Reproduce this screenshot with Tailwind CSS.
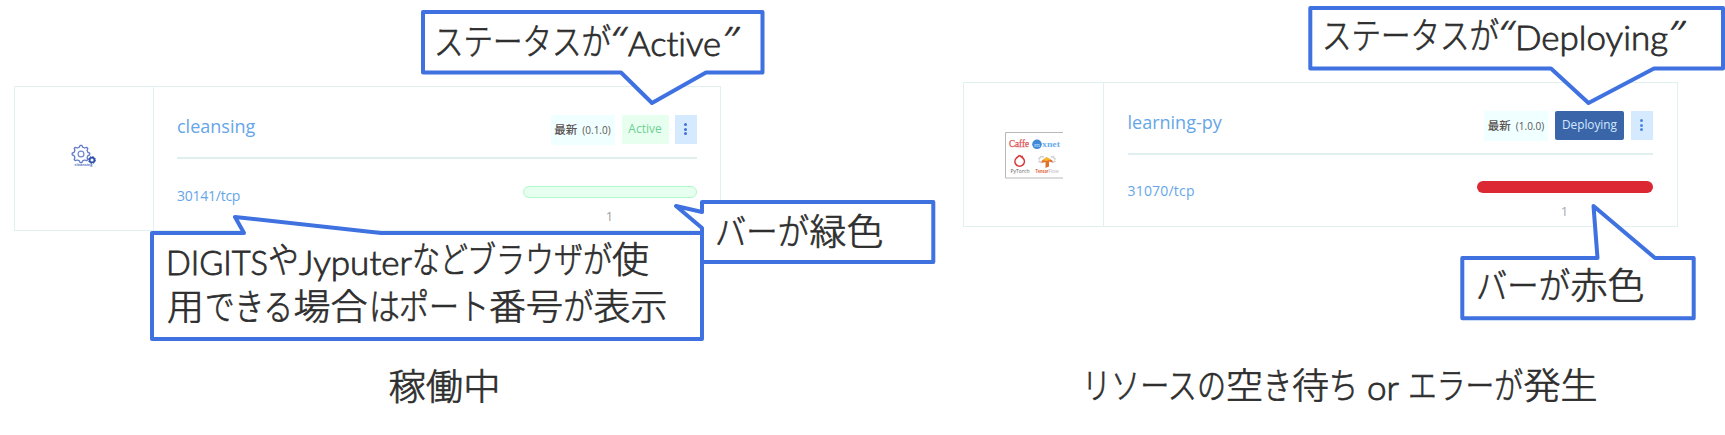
<!DOCTYPE html>
<html lang="ja">
<head>
<meta charset="utf-8">
<title>Status</title>
<script src="https://cdn.jsdelivr.net/npm/@tailwindcss/browser@4"></script>
</head>
<body class="bg-white">
<main class="relative w-[1725px] h-[435px] overflow-hidden font-['Open_Sans','Noto_Sans_CJK_JP',sans-serif]">
  <div class="flex items-start pl-[14px]">
    <!-- running container -->
    <section class="mt-[86px] flex w-[707px] h-[145px] border-[1.5px] border-[#e2f0f0]">
      <div class="flex w-[139px] shrink-0 items-center justify-center border-r-[1.5px] border-[#e2f0f0]">
        <svg class="-ml-0.5 -mt-1" width="28" height="26" viewBox="0 0 28 26" fill="none">
          <path d="M10.3 3.2L11.2 1.3H12.8L13.7 3.2L15.6 4L17.6 3.3L18.8 4.5L18.1 6.5L18.9 8.3L20.7 9.2V10.8L18.9 11.7L18.1 13.5L18.8 15.5L17.6 16.7L15.6 16L13.7 16.8L12.8 18.7H11.2L10.3 16.8L8.4 16L6.4 16.7L5.2 15.5L5.9 13.5L5.1 11.7L3.2 10.8V9.2L5.1 8.3L5.9 6.5L5.2 4.5L6.4 3.3L8.4 4Z" stroke="#5f7bc8" stroke-width="1.3" stroke-linejoin="round"/>
          <circle cx="12" cy="10" r="2.9" stroke="#6f88cf" stroke-width="1.2"/>
          <circle cx="23" cy="16" r="2.4" fill="#fff" stroke="#2f4fae" stroke-width="1.7"/>
          <circle cx="23" cy="16" r="3.5" stroke="#2f4fae" stroke-width="1" stroke-dasharray="1.5 1.25"/>
          <text x="5.5" y="22" textLength="18" lengthAdjust="spacingAndGlyphs" fill="#5f7bc8" font-size="4" font-weight="700">cleansing</text>
        </svg>
      </div>
      <div class="flex flex-1 flex-col pl-[23px] pr-[23.5px] pt-[28px]">
        <div class="flex h-[30px] items-start">
          <h2 class="-mt-px flex-1 text-[18px] leading-[24px] text-[#65a6e8]">cleansing</h2>
          <div class="flex h-[29.5px] w-[64px] items-center justify-center gap-[5px] bg-[#f0ffff] text-[#5c5453]"><span class="text-[11.5px] leading-none font-medium">最新</span><span class="text-[10px] leading-none">(0.1.0)</span></div>
          <div class="ml-[7px] flex h-[28.5px] w-[47px] items-center justify-center rounded-[2px] bg-[#e6ffee] text-[12px] text-[#6fcf97]">Active</div>
          <div class="ml-[6px] flex h-[28.5px] w-[22px] flex-col items-center justify-center gap-[1.6px] bg-[#d5eafe]"><i class="size-[3px] rounded-full bg-[#3f72d8]"></i><i class="size-[3px] rounded-full bg-[#3f72d8]"></i><i class="size-[3px] rounded-full bg-[#3f72d8]"></i></div>
        </div>
        <div class="mt-[12px] h-[2px] bg-[#e0eeee]"></div>
        <div class="flex justify-between pt-[26.5px]">
          <p class="text-[14px] leading-[20px] -tracking-[0.25px] text-[#65a6e8]">30141/tcp</p>
          <div class="w-[174px]">
            <div class="h-[12px] rounded-full border-[1.5px] border-[#aefac8] bg-[#e6ffee]"></div>
            <div class="mt-[9px] text-center text-[13px] leading-[18px] text-[#a3a09f]">1</div>
          </div>
        </div>
      </div>
    </section>
    <!-- deploying container -->
    <section class="mt-[82px] ml-[242px] flex w-[714.5px] h-[145px] border-[1.5px] border-[#e2f0f0]">
      <div class="flex w-[139.5px] shrink-0 items-center justify-center border-r-[1.5px] border-[#e2f0f0]">
        <svg class="ml-0.5" width="60" height="48" viewBox="0 0 60 48" fill="none">
          <path d="M59 1.5H1.5V47H59" stroke="#b8b8b8" stroke-width="1"/>
          <g font-family="Liberation Serif, serif">
            <text x="5" y="16" textLength="20" lengthAdjust="spacingAndGlyphs" fill="#dc4f54" stroke="#dc4f54" stroke-width=".25" font-size="9.5">Caffe</text>
            <circle cx="33" cy="13.3" r="4.8" fill="#3f8ad8"/>
            <text x="30" y="15.5" textLength="6" lengthAdjust="spacingAndGlyphs" fill="#b9dcff" font-size="7">m</text>
            <text x="38" y="15.5" textLength="18" lengthAdjust="spacingAndGlyphs" fill="#6aaeec" font-size="8.5" font-weight="700">xnet</text>
          </g>
          <path d="M15.5 24.3L12.3 27.2A4.7 4.7 0 1 0 19.2 27.4L15.5 24.3" stroke="#d8383c" stroke-width="1.6"/>
          <circle cx="18.3" cy="25.2" r=".7" fill="#d8383c"/>
          <text x="6.5" y="41.5" textLength="19" lengthAdjust="spacingAndGlyphs" fill="#606060" font-size="5.5">PyTorch</text>
          <path d="M34.5 28.5L37 25.5L40 26M34.5 30L37 31.5M51.5 28.5L49 25.5L47 26M51.5 30L48 31.5" stroke="#cfcfd2" stroke-width="1.5"/>
          <path d="M37.5 30L42.5 26.2L48.5 29.5V31.5L45 30.5V35.5L41.5 37V31L37.5 32Z" fill="#e3702a"/>
          <path d="M38.5 29L42.5 26.2L47 28.6L42.5 30Z" fill="#f5b52e"/>
          <text x="31.5" y="42" textLength="13" lengthAdjust="spacingAndGlyphs" fill="#e2673c" font-size="5" font-weight="700">Tensor</text>
          <text x="44.5" y="42" textLength="10" lengthAdjust="spacingAndGlyphs" fill="#b4b4ba" font-size="5">Flow</text>
        </svg>
      </div>
      <div class="flex flex-1 flex-col pl-[24px] pr-[24px] pt-[27.5px]">
        <div class="flex h-[30px] items-start">
          <h2 class="-mt-px flex-1 text-[18px] leading-[24px] text-[#65a6e8]">learning-py</h2>
          <div class="flex h-[30px] w-[64px] items-center justify-center gap-[5px] bg-[#f0ffff] text-[#5c5453]"><span class="text-[11.5px] leading-none font-medium">最新</span><span class="text-[10px] leading-none">(1.0.0)</span></div>
          <div class="ml-[7px] flex h-[29.5px] w-[69px] items-center justify-center rounded-[2px] bg-[#3a66a9] text-[11.8px] text-[#d3e8ff]">Deploying</div>
          <div class="ml-[7px] flex h-[29.5px] w-[21.5px] flex-col items-center justify-center gap-[1.6px] bg-[#d5eafe]"><i class="size-[3px] rounded-full bg-[#4a86e0]"></i><i class="size-[3px] rounded-full bg-[#4a86e0]"></i><i class="size-[3px] rounded-full bg-[#4a86e0]"></i></div>
        </div>
        <div class="mt-[12px] h-[2px] bg-[#e0f0f0]"></div>
        <div class="flex justify-between pt-[26.5px]">
          <p class="text-[14px] leading-[20px] tracking-[0.2px] text-[#65a6e8]">31070/tcp</p>
          <div class="w-[176px]">
            <div class="h-[12px] rounded-full bg-[#dc2832]"></div>
            <div class="mt-[9px] text-center text-[13px] leading-[18px] text-[#a3a9af]">1</div>
          </div>
        </div>
      </div>
    </section>
  </div>

  <!-- callouts and captions laid over the cards -->
  <svg class="absolute inset-0" width="1725" height="435" viewBox="0 0 1725 435">
    <g fill="#fff" stroke="#3f72e0" stroke-width="4" stroke-linejoin="round">
      <path d="M423 12H762.5V72.5H706L652 103L621 72.5H423Z"/>
      <path d="M702 202H933.3V262H702V228L676 206L702 212Z"/>
      <path d="M152 233H244L235 217L381 233H702V339H152Z"/>
      <path d="M1310.3 8H1723V68.5H1654L1588.5 103L1551 68.5H1310.3Z"/>
      <path d="M1462.3 258H1597.5L1593.5 206L1655 258H1693.7V318.3H1462.3Z"/>
    </g>
    <g fill="#2e2e2e" font-size="36" font-family="'Noto Sans CJK JP', sans-serif" font-weight="300" stroke="#2e2e2e" stroke-width=".7">
      <text x="434" y="55" textLength="177" lengthAdjust="spacingAndGlyphs">ステータスが</text>
      <text x="1322" y="49" textLength="177" lengthAdjust="spacingAndGlyphs">ステータスが</text>

      <text x="268" y="273" textLength="31" lengthAdjust="spacingAndGlyphs">や</text>
      <text x="412" y="273" textLength="56" lengthAdjust="spacingAndGlyphs">など</text>
      <text x="467" y="273" textLength="145" lengthAdjust="spacingAndGlyphs">ブラウザが</text>
      <text x="612" y="273" textLength="37" lengthAdjust="spacingAndGlyphs">使</text>

      <text x="167" y="320" textLength="37" lengthAdjust="spacingAndGlyphs">用</text>
      <text x="205" y="320" textLength="88" lengthAdjust="spacingAndGlyphs">できる</text>
      <text x="293.5" y="320" textLength="74" lengthAdjust="spacingAndGlyphs">場合</text>
      <text x="369" y="320" textLength="31" lengthAdjust="spacingAndGlyphs">は</text>
      <text x="399" y="320" textLength="90" lengthAdjust="spacingAndGlyphs">ポート</text>
      <text x="489" y="320" textLength="74" lengthAdjust="spacingAndGlyphs">番号</text>
      <text x="563.5" y="320" textLength="30" lengthAdjust="spacingAndGlyphs">が</text>
      <text x="593.5" y="320" textLength="74" lengthAdjust="spacingAndGlyphs">表示</text>

      <text x="715" y="245" textLength="94" lengthAdjust="spacingAndGlyphs">バーが</text>
      <text x="809.5" y="245" textLength="74" lengthAdjust="spacingAndGlyphs">緑色</text>
      <text x="1476" y="299" textLength="94" lengthAdjust="spacingAndGlyphs">バーが</text>
      <text x="1570.5" y="299" textLength="74" lengthAdjust="spacingAndGlyphs">赤色</text>

      <text x="388.5" y="400" textLength="112" lengthAdjust="spacingAndGlyphs">稼働中</text>
      <text x="1082" y="398.5" textLength="144" lengthAdjust="spacingAndGlyphs">リソースの</text>
      <text x="1226" y="398.5" textLength="37" lengthAdjust="spacingAndGlyphs">空</text>
      <text x="1263" y="398.5" textLength="29" lengthAdjust="spacingAndGlyphs">き</text>
      <text x="1292" y="398.5" textLength="37" lengthAdjust="spacingAndGlyphs">待</text>
      <text x="1329" y="398.5" textLength="29" lengthAdjust="spacingAndGlyphs">ち</text>
      <text x="1408" y="398.5" textLength="115" lengthAdjust="spacingAndGlyphs">エラーが</text>
      <text x="1523.5" y="398.5" textLength="74" lengthAdjust="spacingAndGlyphs">発生</text>
    </g>
    <g class="[font-variant-ligatures:none]" fill="#2e2e2e" font-size="32.5" font-family="Lato, sans-serif" font-weight="300" stroke="#2e2e2e" stroke-width=".8">
      <text x="628" y="56" textLength="93" lengthAdjust="spacingAndGlyphs">Active</text>
      <text x="1515" y="50" textLength="153" lengthAdjust="spacingAndGlyphs">Deploying</text>
      <text x="166" y="275" textLength="102" lengthAdjust="spacingAndGlyphs">DIGITS</text>
      <text x="299" y="275" textLength="113" lengthAdjust="spacingAndGlyphs">Jyputer</text>
      <text x="1367" y="400" textLength="32" lengthAdjust="spacingAndGlyphs">or</text>
    </g>
    <g fill="#2e2e2e" font-size="34" font-family="'Open Sans', sans-serif" font-weight="300" font-style="italic" stroke="#2e2e2e" stroke-width=".5">
      <text x="610" y="52" textLength="14" lengthAdjust="spacingAndGlyphs">“</text>
      <text x="722" y="52" textLength="14" lengthAdjust="spacingAndGlyphs">”</text>
      <text x="1498" y="46" textLength="14" lengthAdjust="spacingAndGlyphs">“</text>
      <text x="1668" y="46" textLength="14" lengthAdjust="spacingAndGlyphs">”</text>
    </g>
  </svg>
</main>
</body>
</html>
